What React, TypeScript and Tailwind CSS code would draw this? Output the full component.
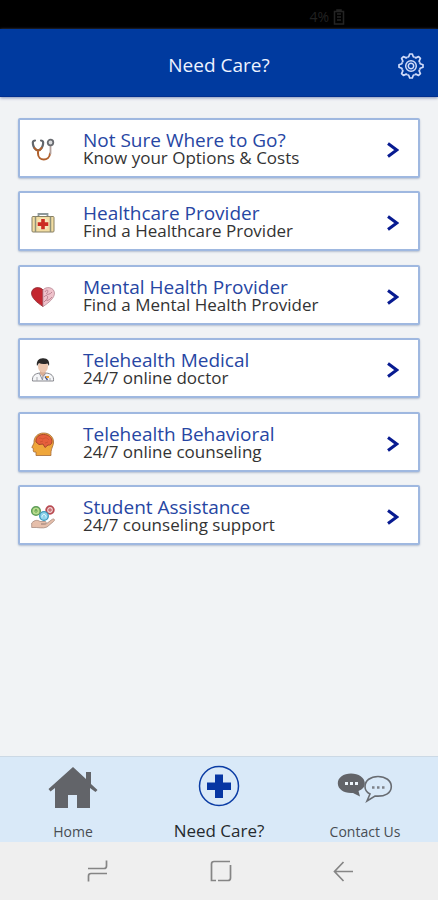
import type { ReactNode } from "react";

function StethoscopeIcon() {
  return (
    <svg viewBox="0 0 24 24" className="size-6" fill="none" strokeLinecap="round" aria-hidden="true">
      <path d="M4 2.500C2 2.500 1.500 4 2 6.500C2.600 9.500 4.500 12 7 12.500C9.500 12 11.400 9.500 12 6.500C12.500 4 12 2.500 10 2.500" stroke="#62666c" strokeWidth="2.200" />
      <path d="M3.500 10C5 12 6 12.500 7 12.500C8 12.500 9.500 12 10.500 10M7 12.500V15.500C7 23.500 18.500 23.500 19 15.500" stroke="#b0602c" strokeWidth="2" />
      <path d="M19.500 7V15.500" stroke="#b3a19c" strokeWidth="1.800" />
      <circle cx="19.500" cy="4.500" r="2.800" fill="#d9dadc" stroke="#696b70" strokeWidth="1.800" />
    </svg>
  );
}

function MedicalKitIcon() {
  return (
    <svg viewBox="0 0 24 24" className="size-6" fill="none" aria-hidden="true">
      <path d="M7.500 5.500V3H16.500V5.500" stroke="#8d989a" strokeWidth="1.800" />
      <rect x="1" y="5.500" width="22" height="15.500" rx="1" fill="#f2dda2" stroke="#877f62" />
      <path d="M4.500 5.500V21M19.500 5.500V21" stroke="#8e917a" strokeWidth="1.500" />
      <circle cx="12" cy="13" r="6" fill="#f6e7bd" />
      <path d="M10.200 8H13.800V11.300H17.300V14.900H13.800V18.200H10.200V14.900H6.700V11.300H10.200Z" fill="#cc2c22" />
    </svg>
  );
}

function HeartIcon() {
  return (
    <svg viewBox="0 0 24 24" className="size-6" fill="none" aria-hidden="true">
      <path d="M12 5C9 1 1 2 .5 8C.3 13 6.500 18 12 21.500Z" fill="#c3262f" stroke="#8d2a31" strokeWidth=".8" />
      <path d="M12 5C15 1 23 2 23.500 8C23.700 13 17.500 18 12 21.500Z" fill="#efc2cb" stroke="#b88b97" strokeWidth=".8" />
      <path d="M14 7C16 3 18 6 16 8S19 10 21 7M13 12C15 9 18 11 16 14S19 15 21 12M13 17L15 15" stroke="#b57c8c" strokeWidth=".9" />
    </svg>
  );
}

function DoctorIcon() {
  return (
    <svg viewBox="0 0 24 24" className="size-6" fill="none" aria-hidden="true">
      <path d="M1.500 23C1 18 3.500 15.500 9 15H15C20.500 15.500 23 18 22.500 23Z" fill="#f5f6f8" stroke="#898a90" />
      <path d="M9 12H14.500V16L12 19L9 16Z" fill="#d9ad94" />
      <ellipse cx="12" cy="8.500" rx="5" ry="6" fill="#ecc7b0" />
      <path d="M6 8C5 3 8 0 12 .2C16.500 0 19 3 18 8L16.500 5.500C13 6.500 10 6.200 8 5Z" fill="#2b2929" />
      <path d="M8.500 15.500L11.500 22L12 18.500L14.500 15.500" stroke="#8c8e99" />
      <path d="M14 18.500L16.500 22" stroke="#40518a" strokeWidth="1.300" />
      <path d="M15 18H18V20H15Z" fill="#e5a23e" />
      <path d="M6 19V23M19 20V23" stroke="#a7a8ad" />
    </svg>
  );
}

function MindIcon() {
  return (
    <svg viewBox="0 0 24 24" className="size-6" fill="none" aria-hidden="true">
      <path d="M5 23.500V20H3.500C2 20 2 18.500 2.500 16.500L.8 15.500L3 11C2.500 5 7 1 12.500 1C19 1 23 5.500 22.500 11C22 15 19.500 17 20 23.500Z" fill="#efa63a" stroke="#a36a38" strokeWidth=".8" />
      <path d="M5 10C4.500 5 8 2.500 12.500 2.500C17.500 2.500 21 5.500 21 9.500C21 12 19 13.500 17 13L14 15.500L12 12L8 12.500Z" fill="#e65f3c" stroke="#a9462d" />
      <path d="M8 6.500C10 5 11 8 13 6.500S16 6 18 8M9 10L12 9M14 11L17 10" stroke="#c9502f" strokeWidth=".8" />
    </svg>
  );
}

function SupportIcon() {
  return (
    <svg viewBox="0 0 24 24" className="size-6" fill="none" aria-hidden="true">
      <circle cx="5" cy="6" r="4.300" fill="#b9dc8d" stroke="#5e9d58" strokeWidth="1.500" />
      <circle cx="19" cy="5" r="3.800" fill="#f0d0d0" stroke="#b94b52" strokeWidth="1.800" />
      <circle cx="13" cy="11" r="4.300" fill="#8fd4ec" stroke="#3c98bd" strokeWidth="1.300" />
      <path d="M5 8V5M3.500 6.500L5 4L6.500 6.500" stroke="#5f9f4f" strokeWidth=".9" />
      <path d="M19 3V7M17 5H21" stroke="#b94b52" strokeWidth=".9" />
      <path d="M11 12.500V11L13 9L15 11V12.500" stroke="#e2f5fb" strokeWidth=".9" />
      <path d="M.7 18C4 14.500 7 15 9 16.500H14C16 16.500 15.500 19 13.500 19H10L15 19L21 14.500C23 13 24.500 15 22.500 16.500L16 22C12 24 7 22 .7 22.500Z" fill="#e6bfab" stroke="#a78b80" strokeWidth=".8" />
    </svg>
  );
}

function GearIcon() {
  const teeth = [0, 45, 90, 135, 180, 225, 270, 315];
  return (
    <svg viewBox="-13 -13 26 26" className="size-[26px]" fill="none" stroke="#d0dbfa" strokeLinejoin="round" aria-hidden="true">
      {teeth.map((angle) => (
        <path key={angle} transform={`rotate(${angle})`} d="M-3.600 -8.700L-2.300 -9.200L-1.300 -12H1.300L2.300 -9.200L3.600 -8.700" strokeWidth="1.700" />
      ))}
      <circle r="5.300" strokeWidth="1.500" />
      <circle r="2.700" strokeWidth="1.500" />
    </svg>
  );
}

function HomeIcon() {
  return (
    <svg viewBox="0 0 50 42" className="h-[42px] w-[50px]" fill="#626469" aria-hidden="true">
      <path d="M25 0L38 12V5H43V17L49.500 23L47.500 25L42 21V41H29V28H20V41H7V21L2.500 24.500L.5 22Z" />
    </svg>
  );
}

function CareIcon() {
  return (
    <svg viewBox="0 0 42 42" className="size-[42px]" fill="none" aria-hidden="true">
      <circle cx="21" cy="21" r="19.500" stroke="#0b3ca4" strokeWidth="1.500" />
      <path d="M17 9.500H25V17.500H33V25H25V33H17V25H9V17.500H17Z" fill="#0636a3" />
    </svg>
  );
}

function ChatIcon() {
  return (
    <svg viewBox="0 0 56 30" className="h-[30px] w-14" fill="none" aria-hidden="true">
      <path d="M14 .5C6.500 .5 .8 4.500 .8 10.300C.8 16 6.500 20 14 20H16L23 23.500L21.500 18C25.500 16.500 27.800 14 27.800 10.300C27.800 4.500 21.500 .5 14 .5Z" fill="#626469" />
      <path d="M41 3.500C33.500 3.500 28 7.500 28 13.500C28 17 30 19.500 33 21L30 28L38 23C48 24 54.300 20 54.300 13.500C54.300 7.500 48.500 3.500 41 3.500Z" stroke="#686c72" strokeWidth="1.600" />
      <path d="M8 10.500H11M13 10.500H16M18 10.500H21" stroke="#edf4fa" strokeWidth="2.800" />
      <path d="M35 14.500H37.500M40 14.500H42.500M45 14.500H47.500" stroke="#7d8188" strokeWidth="2.500" />
    </svg>
  );
}

function ChevronIcon() {
  return (
    <svg viewBox="0 0 12 16" className="h-4 w-3" fill="none" stroke="#081b91" strokeWidth="3" aria-hidden="true">
      <path d="M1 1.500L9.700 8L1 14.500" />
    </svg>
  );
}

type Option = { title: string; detail: string; icon: ReactNode };

const options: Option[] = [
  { title: "Not Sure Where to Go?", detail: "Know your Options & Costs", icon: <StethoscopeIcon /> },
  { title: "Healthcare Provider", detail: "Find a Healthcare Provider", icon: <MedicalKitIcon /> },
  { title: "Mental Health Provider", detail: "Find a Mental Health Provider", icon: <HeartIcon /> },
  { title: "Telehealth Medical", detail: "24/7 online doctor", icon: <DoctorIcon /> },
  { title: "Telehealth Behavioral", detail: "24/7 online counseling", icon: <MindIcon /> },
  { title: "Student Assistance", detail: "24/7 counseling support", icon: <SupportIcon /> },
];

export default function App() {
  return (
    <div className="flex min-h-screen flex-col bg-[#f1f3f5] font-['Open_Sans','Noto_Sans',sans-serif]">
      <div className="flex h-[29px] items-center justify-end gap-1 bg-black pt-1 pr-[93px] text-sm text-[#222222]">
        <span>4%</span>
        <svg viewBox="0 0 12 16" className="h-4 w-3" fill="none" stroke="#242424" strokeWidth="1.500" aria-label="Battery">
          <path d="M4 2V1H8V2M1.500 2.500H10.500V15H1.500ZM4 5H8M4 8H8M4 11H8" />
        </svg>
      </div>

      <header className="grid h-[68px] grid-cols-[1fr_auto_1fr] items-center border-b border-[#002e8f] bg-[#003a9f] px-3.5 pt-1.5 shadow-[0_1px_3px_#8090b8]">
        <h1 className="col-start-2 text-[19px] text-[#eef3ff]">Need Care?</h1>
        <button type="button" aria-label="Settings" className="justify-self-end">
          <GearIcon />
        </button>
      </header>

      <main className="grow px-[18px] pt-[21px] pb-5">
        <ul className="flex min-h-[427px] flex-col justify-between">
          {options.map((option) => (
            <li key={option.title}>
              <button type="button" className="flex h-[60px] w-full items-center rounded-xs border-2 border-[#9fb8e0] bg-white pr-[19px] pl-[11px] text-left shadow-[0_1px_2px_#b5bfd0]">
                <span className="w-[52px] shrink-0 pt-1">{option.icon}</span>
                <span className="flex grow flex-col">
                  <span className="text-[19px] leading-5 text-[#2746a3]">{option.title}</span>
                  <span className="text-[17px] leading-4 text-[#333333]">{option.detail}</span>
                </span>
                <span className="shrink-0 pt-1">
                  <ChevronIcon />
                </span>
              </button>
            </li>
          ))}
        </ul>
      </main>

      <nav aria-label="Main" className="grid h-[86px] grid-cols-3 border-t border-[#ccd9e5] bg-[#d9e9f8] text-[#484d53]">
        <a href="#home" className="flex flex-col items-center justify-between pt-2.5">
          <HomeIcon />
          <span className="text-sm leading-5">Home</span>
        </a>
        <a href="#care" aria-current="page" className="flex flex-col items-center justify-between pt-2 text-[#25292e]">
          <CareIcon />
          <span className="text-[17px] leading-[22px]">Need Care?</span>
        </a>
        <a href="#contact" className="flex flex-col items-center justify-between pt-4">
          <ChatIcon />
          <span className="text-sm leading-5">Contact Us</span>
        </a>
      </nav>

      <div className="flex h-[58px] items-center justify-center gap-[101px] bg-[#efefef] pl-1 text-[#858585]">
        <button type="button" aria-label="Recent apps">
          <svg viewBox="0 0 22 24" className="h-6 w-[22px]" fill="none" stroke="currentColor" strokeWidth="1.700" aria-hidden="true">
            <path d="M1 9.500H17Q19.500 9.500 19.500 7V1.500M20 14.500H4Q1.500 14.500 1.500 17V22.500" />
          </svg>
        </button>
        <button type="button" aria-label="Home screen">
          <svg viewBox="0 0 22 24" className="h-6 w-[22px]" fill="none" stroke="currentColor" strokeWidth="1.700" aria-hidden="true">
            <path d="M20 2.500H4Q1.500 2.500 1.500 5V21.500H6M8 21.500H18Q20.500 21.500 20.500 19V6" />
          </svg>
        </button>
        <button type="button" aria-label="Back">
          <svg viewBox="0 0 22 24" className="h-6 w-[22px]" fill="none" stroke="currentColor" strokeWidth="1.700" aria-hidden="true">
            <path d="M20 12.500H2M10.500 3L1.500 12.500L10.500 22" />
          </svg>
        </button>
      </div>
    </div>
  );
}
